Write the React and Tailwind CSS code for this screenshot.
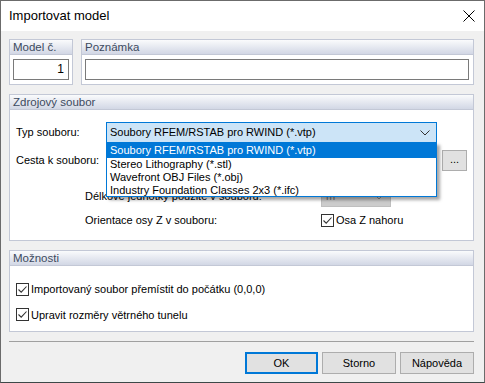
import React from "react";

function Group({ title, className, children }) {
  return (
    <div className={"border border-[#c3c8d6] bg-white flex flex-col " + (className || "")}>
      <div className="h-[15px] shrink-0 bg-gradient-to-b from-[#fafbfc] to-[#d2d7e5] border-b border-[#c3c8d6] pl-[3px] text-[11.5px] leading-[15px] text-[#3c4a60] whitespace-nowrap">
        {title}
      </div>
      <div className="flex-1 flex flex-col">{children}</div>
    </div>
  );
}

function Check({ label }) {
  return (
    <div className="flex items-center gap-[2px] whitespace-nowrap">
      <div className="w-[13px] h-[13px] shrink-0 border border-[#333] bg-white flex items-center justify-center">
        <svg width="11" height="11" viewBox="0 0 11 11">
          <path d="M1.5 5.5 L4.2 8.2 L9.5 2.5" fill="none" stroke="#333" strokeWidth="1.1" />
        </svg>
      </div>
      <span>{label}</span>
    </div>
  );
}

function Chevron({ color }) {
  return (
    <svg width="10" height="6" viewBox="0 0 10 6">
      <path d="M0.5 0.5 L5 5 L9.5 0.5" fill="none" stroke={color} strokeWidth="1" />
    </svg>
  );
}

export default function App() {
  const font = { fontFamily: '"Liberation Sans", Arial, sans-serif' };
  return (
    <div
      className="relative w-[485px] h-[383px] border border-[#6b6b6b] border-b-[#3d4848] bg-[#f0f0f0] flex flex-col text-[11px] text-black overflow-hidden"
      style={font}
    >
      {/* Title bar */}
      <div className="h-[30px] shrink-0 bg-white flex items-center justify-between pl-[8px] pr-[9px]">
        <span className="text-[13px] text-[#000]">Importovat model</span>
        <svg width="12" height="12" viewBox="0 0 12 12">
          <path d="M0.5 0.5 L11.5 11.5 M11.5 0.5 L0.5 11.5" stroke="#000" strokeWidth="1" />
        </svg>
      </div>

      <div className="flex-1 flex flex-col pl-[8px] pr-[10px] pt-[8px]">
        {/* Row 1 */}
        <div className="flex gap-[8px] h-[46px]">
          <Group title="Model č." className="w-[64px]">
            <div className="px-[3px] pt-[4px]">
              <div className="h-[21px] border border-[#7a7a7a] bg-white text-right pr-[4px] leading-[19px] text-[12px]">1</div>
            </div>
          </Group>
          <Group title="Poznámka" className="flex-1">
            <div className="pl-[3px] pr-[4px] pt-[4px]">
              <div className="h-[21px] border border-[#7a7a7a] bg-white"></div>
            </div>
          </Group>
        </div>

        {/* Zdrojový soubor */}
        <Group title="Zdrojový soubor" className="mt-[9px] h-[147px]">
          <div className="pl-[6px] pt-[12px] flex flex-col whitespace-nowrap">
            <div className="flex items-center h-[21px]">
              <span className="w-[90px] shrink-0">Typ souboru:</span>
              <div className="w-[331px] h-[21px] border border-[#0078d7] bg-[#cce4f7] flex items-center justify-between pl-[3px] pr-[6px]">
                <span>Soubory RFEM/RSTAB pro RWIND (*.vtp)</span>
                <Chevron color="#333" />
              </div>
            </div>
            <div className="flex items-center h-[21px] mt-[7px]">
              <span className="w-[90px] shrink-0">Cesta k souboru:</span>
              <div className="w-[331px] h-[21px] border border-[#7a7a7a] bg-white"></div>
              <div className="ml-[5px] w-[25px] h-[21px] border border-[#adadad] bg-[#e1e1e1] flex items-center justify-center leading-none pb-[3px]">
                ...
              </div>
            </div>
            <div className="flex items-center h-[21px] mt-[15px]">
              <span className="ml-[69px] w-[236px] shrink-0">Délkové jednotky použité v souboru:</span>
              <div className="w-[70px] h-[21px] border border-[#bfbfbf] bg-[#cccccc] flex items-center justify-between pl-[4px] pr-[6px] text-[#6d6d6d]">
                <span>m</span>
                <Chevron color="#8a8a8a" />
              </div>
            </div>
            <div className="flex items-center h-[21px] mt-[3px]">
              <span className="ml-[69px] w-[236px] shrink-0">Orientace osy Z v souboru:</span>
              <Check label="Osa Z nahoru" />
            </div>
          </div>
        </Group>

        {/* Možnosti */}
        <Group title="Možnosti" className="mt-[9px] h-[82px]">
          <div className="pl-[6px] pt-[15px] flex flex-col gap-[9px]">
            <Check label="Importovaný soubor přemístit do počátku (0,0,0)" />
            <Check label="Upravit rozměry větrného tunelu" />
          </div>
        </Group>

        <div className="mt-[9px] h-px bg-[#a0a0a0]"></div>

        <div className="flex justify-end gap-[4px] mt-[10px]">
          <button className="w-[73px] h-[22px] border-2 border-[#0078d7] bg-[#e1e1e1]">OK</button>
          <button className="w-[74px] h-[22px] border border-[#adadad] bg-[#e1e1e1]">Storno</button>
          <button className="w-[74px] h-[22px] border border-[#adadad] bg-[#e1e1e1]">Nápověda</button>
        </div>
      </div>

      {/* Open dropdown list */}
      <div className="absolute left-[105px] top-[141px] w-[331px] h-[55px] border border-[#0078d7] bg-white shadow-[3px_3px_3px_rgba(0,0,0,0.35)] flex flex-col whitespace-nowrap">
        <div className="h-[15px] bg-[#0078d7] text-white pl-[3px] leading-[15px]">Soubory RFEM/RSTAB pro RWIND (*.vtp)</div>
        <div className="h-[13px] pl-[3px] leading-[13px]">Stereo Lithography (*.stl)</div>
        <div className="h-[13px] pl-[3px] leading-[13px]">Wavefront OBJ Files (*.obj)</div>
        <div className="h-[13px] pl-[3px] leading-[13px]">Industry Foundation Classes 2x3 (*.ifc)</div>
      </div>
    </div>
  );
}
